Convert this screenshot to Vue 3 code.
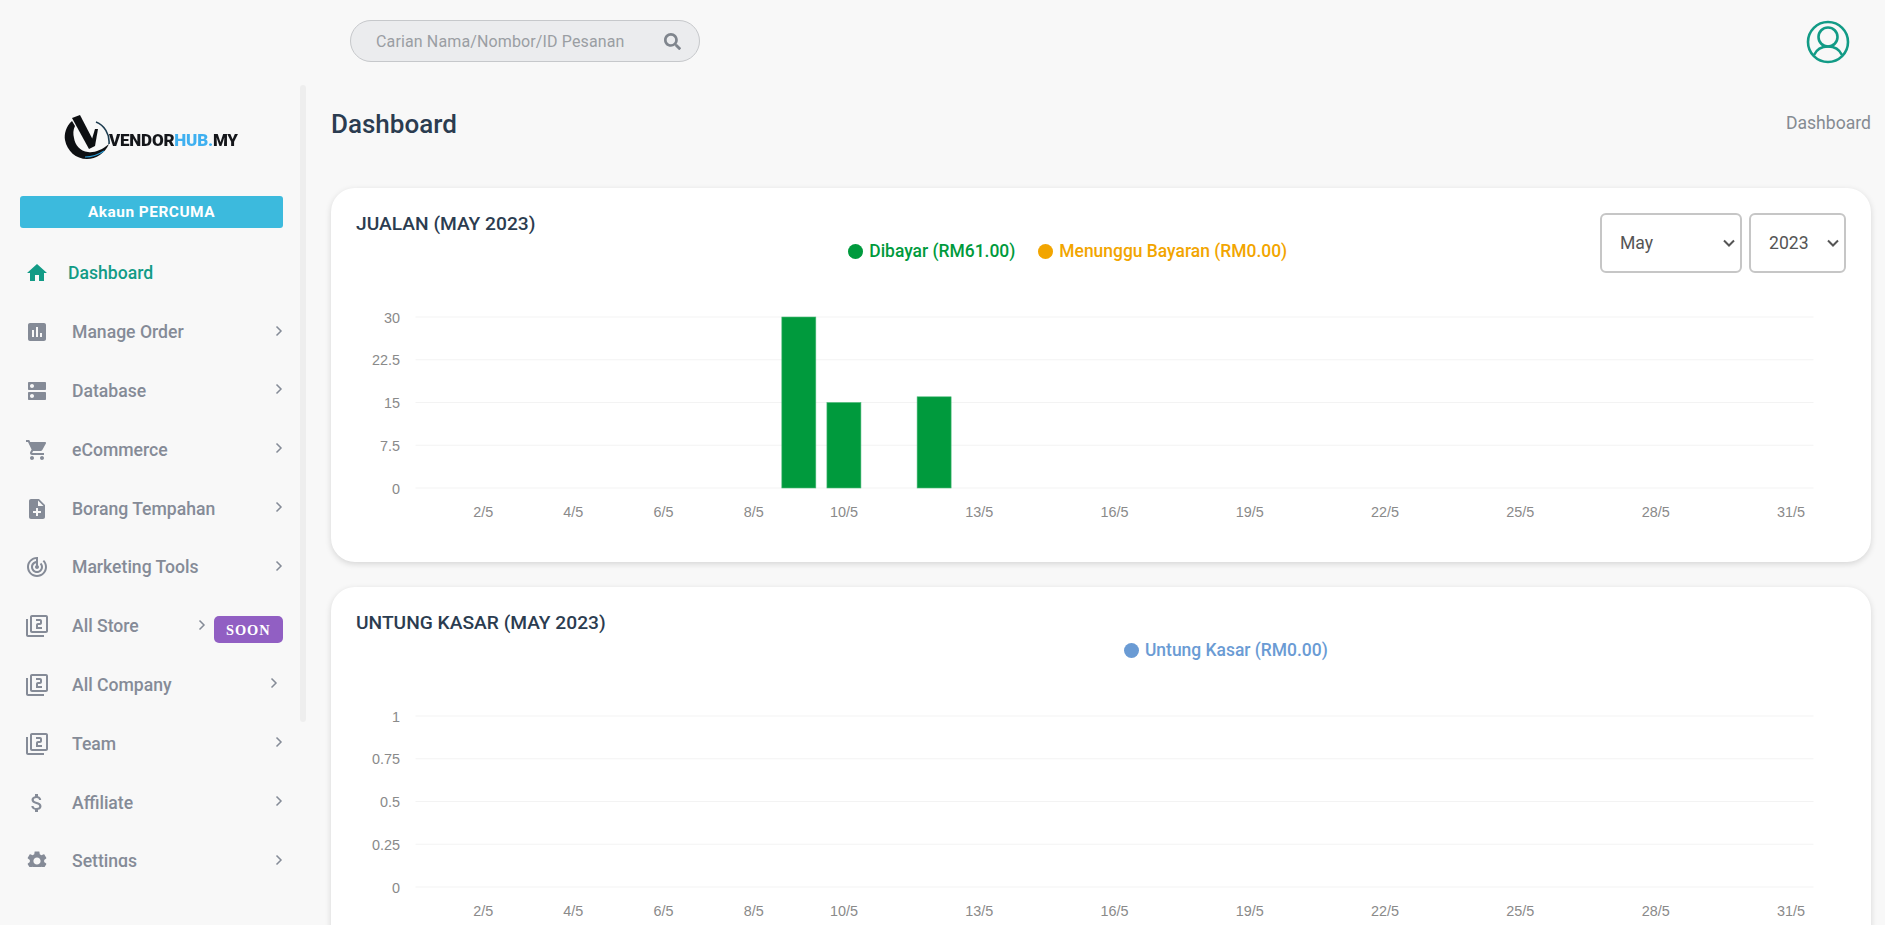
<script setup>
const navItems = [
  { label: 'Manage Order', icon: 'M19 3H5c-1.1 0-2 .9-2 2v14c0 1.1.9 2 2 2h14c1.1 0 2-.9 2-2V5c0-1.1-.9-2-2-2zM9 17H7v-7h2v7zm4 0h-2V7h2v10zm4 0h-2v-4h2v4z' },
  { label: 'Database', icon: 'M20 13H4c-.55 0-1 .45-1 1v6c0 .55.45 1 1 1h16c.55 0 1-.45 1-1v-6c0-.55-.45-1-1-1zM7 19c-1.1 0-2-.9-2-2s.9-2 2-2 2 .9 2 2-.9 2-2 2zM20 3H4c-.55 0-1 .45-1 1v6c0 .55.45 1 1 1h16c.55 0 1-.45 1-1V4c0-.55-.45-1-1-1zM7 9c-1.1 0-2-.9-2-2s.9-2 2-2 2 .9 2 2-.9 2-2 2z' },
  { label: 'eCommerce', icon: 'M7 18c-1.1 0-1.99.9-1.99 2S5.9 22 7 22s2-.9 2-2-.9-2-2-2zM1 2v2h2l3.6 7.59-1.35 2.45c-.16.28-.25.61-.25.96 0 1.1.9 2 2 2h12v-2H7.42c-.14 0-.25-.11-.25-.25l.03-.12.9-1.63h7.45c.75 0 1.41-.41 1.75-1.03l3.58-6.49c.08-.14.12-.31.12-.48 0-.55-.45-1-1-1H5.21l-.94-2H1zm16 16c-1.1 0-1.99.9-1.99 2s.89 2 1.99 2 2-.9 2-2-.9-2-2-2z' },
  { label: 'Borang Tempahan', icon: 'M14 2H6c-1.1 0-1.99.9-1.99 2L4 20c0 1.1.89 2 1.99 2H18c1.1 0 2-.9 2-2V8l-6-6zm2 14h-3v3h-2v-3H8v-2h3v-3h2v3h3v2zm-3-7V3.5L18.5 9H13z' },
  { label: 'Marketing Tools', icon: 'M19.07 4.93l-1.41 1.41C19.1 7.79 20 9.79 20 12c0 4.42-3.58 8-8 8s-8-3.58-8-8c0-4.08 3.05-7.44 7-7.93v2.02C8.16 6.57 6 9.03 6 12c0 3.31 2.69 6 6 6s6-2.69 6-6c0-1.66-.67-3.16-1.76-4.24l-1.41 1.41C15.55 9.9 16 10.9 16 12c0 2.21-1.79 4-4 4s-4-1.79-4-4c0-1.86 1.28-3.41 3-3.86v2.14c-.6.35-1 .98-1 1.72 0 1.1.9 2 2 2s2-.9 2-2c0-.74-.4-1.38-1-1.72V2h-1C6.48 2 2 6.48 2 12s4.48 10 10 10 10-4.48 10-10c0-2.76-1.12-5.26-2.93-7.07z' },
  { label: 'All Store', soon: true, icon: 'M3 5H1v16c0 1.1.9 2 2 2h16v-2H3V5zm18-4H7c-1.1 0-2 .9-2 2v14c0 1.1.9 2 2 2h14c1.1 0 2-.9 2-2V3c0-1.1-.9-2-2-2zm0 16H7V3h14v14zm-4-4h-4v-2h2c1.1 0 2-.89 2-2V7c0-1.11-.9-2-2-2h-4v2h4v2h-2c-1.1 0-2 .89-2 2v4h6v-2z' },
  { label: 'All Company', inset: true, icon: 'M3 5H1v16c0 1.1.9 2 2 2h16v-2H3V5zm18-4H7c-1.1 0-2 .9-2 2v14c0 1.1.9 2 2 2h14c1.1 0 2-.9 2-2V3c0-1.1-.9-2-2-2zm0 16H7V3h14v14zm-4-4h-4v-2h2c1.1 0 2-.89 2-2V7c0-1.11-.9-2-2-2h-4v2h4v2h-2c-1.1 0-2 .89-2 2v4h6v-2z' },
  { label: 'Team', icon: 'M3 5H1v16c0 1.1.9 2 2 2h16v-2H3V5zm18-4H7c-1.1 0-2 .9-2 2v14c0 1.1.9 2 2 2h14c1.1 0 2-.9 2-2V3c0-1.1-.9-2-2-2zm0 16H7V3h14v14zm-4-4h-4v-2h2c1.1 0 2-.89 2-2V7c0-1.11-.9-2-2-2h-4v2h4v2h-2c-1.1 0-2 .89-2 2v4h6v-2z' },
  { label: 'Affiliate', icon: 'M11.8 10.9c-2.27-.59-3-1.2-3-2.15 0-1.09 1.01-1.85 2.7-1.85 1.78 0 2.44.85 2.5 2.1h2.21c-.07-1.72-1.12-3.3-3.21-3.81V3h-3v2.16c-1.94.42-3.5 1.68-3.5 3.61 0 2.31 1.91 3.46 4.7 4.13 2.5.6 3 1.48 3 2.41 0 .69-.49 1.79-2.7 1.79-2.06 0-2.87-.92-2.98-2.1h-2.2c.12 2.19 1.76 3.42 3.68 3.83V21h3v-2.15c1.95-.37 3.5-1.5 3.5-3.55 0-2.84-2.43-3.81-4.7-4.4z' },
  { label: 'Settings', icon: 'M19.14 12.94c.04-.3.06-.61.06-.94 0-.32-.02-.64-.07-.94l2.03-1.58c.18-.14.23-.41.12-.61l-1.92-3.32c-.12-.22-.37-.29-.59-.22l-2.39.96c-.5-.38-1.03-.7-1.62-.94l-.36-2.54c-.04-.24-.24-.41-.48-.41h-3.84c-.24 0-.43.17-.47.41l-.36 2.54c-.59.24-1.13.57-1.62.94l-2.39-.96c-.22-.08-.47 0-.59.22L2.74 8.87c-.12.21-.08.47.12.61l2.03 1.58c-.05.3-.09.63-.09.94s.02.64.07.94l-2.03 1.58c-.18.14-.23.41-.12.61l1.92 3.32c.12.22.37.29.59.22l2.39-.96c.5.38 1.03.7 1.62.94l.36 2.54c.05.24.24.41.48.41h3.84c.24 0 .44-.17.47-.41l.36-2.54c.59-.24 1.13-.56 1.62-.94l2.39.96c.22.08.47 0 .59-.22l1.92-3.32c.12-.22.07-.47-.12-.61l-2.01-1.58zM12 15.6c-1.98 0-3.6-1.62-3.6-3.6s1.62-3.6 3.6-3.6 3.6 1.62 3.6 3.6-1.62 3.6-3.6 3.6z' }
]

// chart geometry, in px inside the card
const plotLeft = 59.5
const plotRight = 1457.5
const plotTop = 45
const plotBottom = 216
const dayWidth = (plotRight - plotLeft) / 31
const xDays = [2, 4, 6, 8, 10, 13, 16, 19, 22, 25, 28, 31]

const dayX = (d) => plotLeft + (d - 0.5) * dayWidth
const tickY = (i) => plotTop + (i * (plotBottom - plotTop)) / 4

const charts = [
  {
    title: 'JUALAN (MAY 2023)',
    legend: [
      { text: 'Dibayar (RM61.00)', color: '#009a3d' },
      { text: 'Menunggu Bayaran (RM0.00)', color: '#f2a500' }
    ],
    ticks: ['30', '22.5', '15', '7.5', '0'],
    max: 30,
    bars: [
      { day: 9, value: 30 },
      { day: 10, value: 15 },
      { day: 12, value: 16 }
    ],
    filters: true
  },
  {
    title: 'UNTUNG KASAR (MAY 2023)',
    legend: [{ text: 'Untung Kasar (RM0.00)', color: '#6a9bd4' }],
    ticks: ['1', '0.75', '0.5', '0.25', '0'],
    max: 1,
    bars: [],
    filters: false
  }
]

const barHeight = (chart, bar) => (bar.value / chart.max) * (plotBottom - plotTop)
</script>

<template>
  <div class="page">
    <header class="topbar">
      <div class="search">
        <input class="search-input" type="text" placeholder="Carian Nama/Nombor/ID Pesanan" />
        <svg class="search-icon" viewBox="0 0 512 512">
          <path d="M505 442.7L405.3 343c-4.5-4.5-10.6-7-17-7H372c27.6-35.3 44-79.7 44-128C416 93.1 322.9 0 208 0S0 93.1 0 208s93.1 208 208 208c48.3 0 92.7-16.4 128-44v16.3c0 6.4 2.5 12.5 7 17l99.7 99.7c9.4 9.4 24.6 9.4 33.9 0l28.3-28.3c9.4-9.4 9.4-24.6.1-34zM208 336c-70.7 0-128-57.2-128-128 0-70.7 57.2-128 128-128 70.7 0 128 57.2 128 128 0 70.7-57.2 128-128 128z" />
        </svg>
      </div>
      <svg class="user-icon" viewBox="0 0 44 44" fill="none" stroke="#129b86" stroke-width="2.6">
        <circle cx="22" cy="22" r="20" />
        <circle cx="22" cy="17" r="9.5" />
        <path d="M8 35c3-6.500 8-8.500 14-8.500s11 2 14 8.500" />
      </svg>
    </header>

    <div class="body-row">
      <aside class="sidebar">
        <div class="logo">
          <svg class="logo-mark" viewBox="0 0 47 45">
            <path fill="#0d0f12" d="M9 6C3 11 1 19 2 25c2 11 11 19 22 19 9 0 18-6 22-15-7 6-15 9-21 8-8-1-13-7-14-14-1-4-1-8 1-12z" />
            <path fill="none" stroke="#2c9ed8" stroke-width="1.1" d="M22 42c7 0 13-2 19-6" />
            <path fill="#0d0f12" d="M9 3l8-3 14 27-5 7z" />
            <path fill="#0d0f12" d="M26 34l6-20h3l-3 17z" />
            <path fill="none" stroke="#1d3c50" stroke-width="1.6" d="M33 7c8 3 14 12 13 22" />
          </svg>
          <span class="logo-text">VENDOR<span class="logo-blue">HUB.</span>MY</span>
        </div>

        <button class="plan-button">Akaun PERCUMA</button>

        <nav class="nav">
          <a class="nav-item active">
            <svg class="nav-icon" viewBox="0 0 24 24"><path d="M10 20v-6h4v6h5v-8h3L12 3 2 12h3v8z" /></svg>
            <span class="nav-label">Dashboard</span>
          </a>
          <a v-for="item in navItems" :key="item.label" class="nav-item">
            <svg class="nav-icon" viewBox="0 0 24 24"><path :d="item.icon" /></svg>
            <span class="nav-label" :class="{ grow: !item.soon }">{{ item.label }}</span>
            <svg class="chevron" :class="{ inset: item.inset, store: item.soon }" viewBox="0 0 8 12" fill="none" stroke="#858b97" stroke-width="1.500">
              <path d="M1.500 1.500L6 6l-4.500 4.500" />
            </svg>
            <span v-if="item.soon" class="soon">SOON</span>
          </a>
        </nav>
        <div class="scroll-thumb"></div>
      </aside>

      <main class="main">
        <div class="title-row">
          <h1 class="page-title">Dashboard</h1>
          <span class="crumb">Dashboard</span>
        </div>

        <section v-for="chart in charts" :key="chart.title" class="card">
          <div class="card-head">
            <h2 class="card-title">{{ chart.title }}</h2>
            <div class="legend">
              <span v-for="l in chart.legend" :key="l.text" class="legend-item" :style="{ color: l.color }">
                <i class="dot" :style="{ background: l.color }"></i>{{ l.text }}
              </span>
            </div>
            <div v-if="chart.filters" class="filters">
              <select class="select month"><option>May</option></select>
              <select class="select year"><option>2023</option></select>
            </div>
          </div>

          <svg class="chart" width="1490" height="268">
            <g v-for="(tick, i) in chart.ticks" :key="tick">
              <line :x1="plotLeft" :x2="plotRight" :y1="tickY(i)" :y2="tickY(i)" stroke="#f3f3f3" />
              <text class="axis" x="44" :y="tickY(i) + 5.5" text-anchor="end">{{ tick }}</text>
            </g>
            <rect
              v-for="bar in chart.bars"
              :key="bar.day"
              :x="dayX(bar.day) - 17"
              :y="plotBottom - barHeight(chart, bar)"
              width="34"
              :height="barHeight(chart, bar)"
              fill="#009a3d"
              stroke="#4dbb7a"
              stroke-width="0.6"
            />
            <text v-for="d in xDays" :key="d" class="axis" :x="dayX(d)" y="245" text-anchor="middle">{{ d }}/5</text>
          </svg>
        </section>
      </main>
    </div>
  </div>
</template>

<style scoped>
.page {
  height: 925px;
  overflow: hidden;
  background: #f8f8f8;
  font-family: Roboto, "Liberation Sans", sans-serif;
}

.topbar {
  height: 85px;
  box-sizing: border-box;
  display: flex;
  align-items: flex-start;
  justify-content: space-between;
  padding: 20px 35px 0 350px;
}

.search {
  width: 350px;
  height: 42px;
  box-sizing: border-box;
  display: flex;
  align-items: center;
  background: #ebecee;
  border: 1px solid #c6c8cb;
  border-radius: 21px;
  padding: 0 18px 0 25px;
}

.search-input {
  flex: 1;
  min-width: 0;
  border: none;
  outline: none;
  background: transparent;
  padding: 0;
  font-family: inherit;
  font-size: 16px;
  letter-spacing: 0.13px;
}

.search-input::placeholder {
  color: #9a9ea3;
  opacity: 1;
}

.search-icon {
  width: 17px;
  height: 17px;
  fill: #7f858d;
}

.user-icon {
  width: 44px;
  height: 44px;
}

.body-row {
  display: flex;
}

.sidebar {
  position: relative;
  width: 331px;
  flex: none;
  height: 782px;
  overflow: hidden;
  box-sizing: border-box;
  padding-top: 30px;
}

.logo {
  height: 45px;
  margin-left: 63px;
  display: flex;
  align-items: center;
}

.logo-mark {
  width: 47px;
  height: 45px;
  flex: none;
  filter: blur(0.5px);
}

.logo-text {
  margin: 5px 0 0 -1px;
  font-size: 17px;
  font-weight: 900;
  color: #14161a;
  letter-spacing: -0.2px;
  filter: blur(0.5px);
}

.logo-blue {
  color: #3fb0f0;
}

.plan-button {
  display: block;
  width: 263px;
  height: 32px;
  margin: 36px 0 16px 20px;
  border: none;
  border-radius: 3px;
  background: #3cbadd;
  color: #fff;
  font-family: inherit;
  font-size: 15.4px;
  font-weight: 700;
  letter-spacing: 0.5px;
}

.nav-item {
  display: flex;
  align-items: center;
  height: 58.8px;
  width: 283px;
  padding-left: 25px;
  box-sizing: border-box;
  color: #858b97;
  font-size: 17.6px;
  font-weight: 500;
}

.nav-icon {
  width: 24px;
  height: 24px;
  flex: none;
  fill: #858b97;
}

.nav-label {
  margin-left: 23px;
}

.nav-label.grow {
  flex: 1;
}

.active {
  color: #129b86;
}

.active .nav-icon {
  fill: #129b86;
}

.active .nav-label {
  margin-left: 19px;
}

.chevron {
  width: 8px;
  height: 12px;
  flex: none;
  margin-top: -3px;
}

.chevron.inset {
  margin-right: 5px;
}

.chevron.store {
  margin-left: 59px;
}

.soon {
  margin: 6px 0 0 8px;
  width: 69px;
  height: 27px;
  line-height: 28px;
  text-align: center;
  border-radius: 5px;
  background: #915fc3;
  color: #fff;
  font-family: "Liberation Serif", serif;
  font-size: 14.4px;
  font-weight: 700;
  letter-spacing: 1px;
}

.scroll-thumb {
  position: absolute;
  left: 300px;
  top: 0;
  width: 6px;
  height: 637px;
  border-radius: 3px;
  background: #eeeeee;
}

.main {
  width: 1540px;
}

.title-row {
  height: 103px;
  display: flex;
  justify-content: space-between;
  align-items: flex-start;
  padding-top: 23px;
  box-sizing: border-box;
}

.page-title {
  margin: 0;
  font-size: 26px;
  line-height: 32px;
  font-weight: 500;
  color: #2b3c50;
}

.crumb {
  font-size: 17.6px;
  line-height: 30px;
  color: #858b92;
}

.card {
  height: 374px;
  box-sizing: border-box;
  margin-bottom: 25px;
  padding: 25px 25px 0;
  background: #fff;
  border-radius: 24px;
  box-shadow: 0 2px 6px rgba(0, 0, 0, 0.14);
}

.card-head {
  display: flex;
  align-items: flex-start;
  height: 60px;
  margin-bottom: -1px;
}

.card-title {
  margin: 0;
  font-size: 19.2px;
  line-height: 22px;
  font-weight: 500;
  color: #2b3c50;
}

.legend {
  flex: 1;
  display: flex;
  justify-content: center;
  gap: 23px;
  margin-top: 28px;
}

.legend-item {
  display: flex;
  align-items: center;
  font-size: 17.45px;
  line-height: 20px;
  font-weight: 500;
}

.dot {
  width: 15px;
  height: 15px;
  border-radius: 50%;
  margin-right: 6px;
}

.filters {
  display: flex;
  gap: 7px;
}

.select {
  height: 60px;
  box-sizing: border-box;
  appearance: none;
  border: 2px solid #c6c6c6;
  border-radius: 6px;
  background-color: #fff;
  background-image: url("data:image/svg+xml,%3Csvg xmlns='http://www.w3.org/2000/svg' viewBox='0 0 12 8'%3E%3Cpath d='M1 1.500l5 5 5-5' fill='none' stroke='%23555' stroke-width='2'/%3E%3C/svg%3E");
  background-repeat: no-repeat;
  background-size: 12px 8px;
  background-position: right 5px center;
  color: #555;
  font-family: inherit;
  font-size: 17.6px;
  padding-left: 18px;
}

.month {
  width: 142px;
}

.year {
  width: 97px;
}

.chart {
  display: block;
}

.axis {
  font-family: "Liberation Sans", Arial, sans-serif;
  font-size: 14.4px;
  fill: #8a8a8a;
}
</style>

<style>
body {
  background: #f8f8f8;
}
</style>
